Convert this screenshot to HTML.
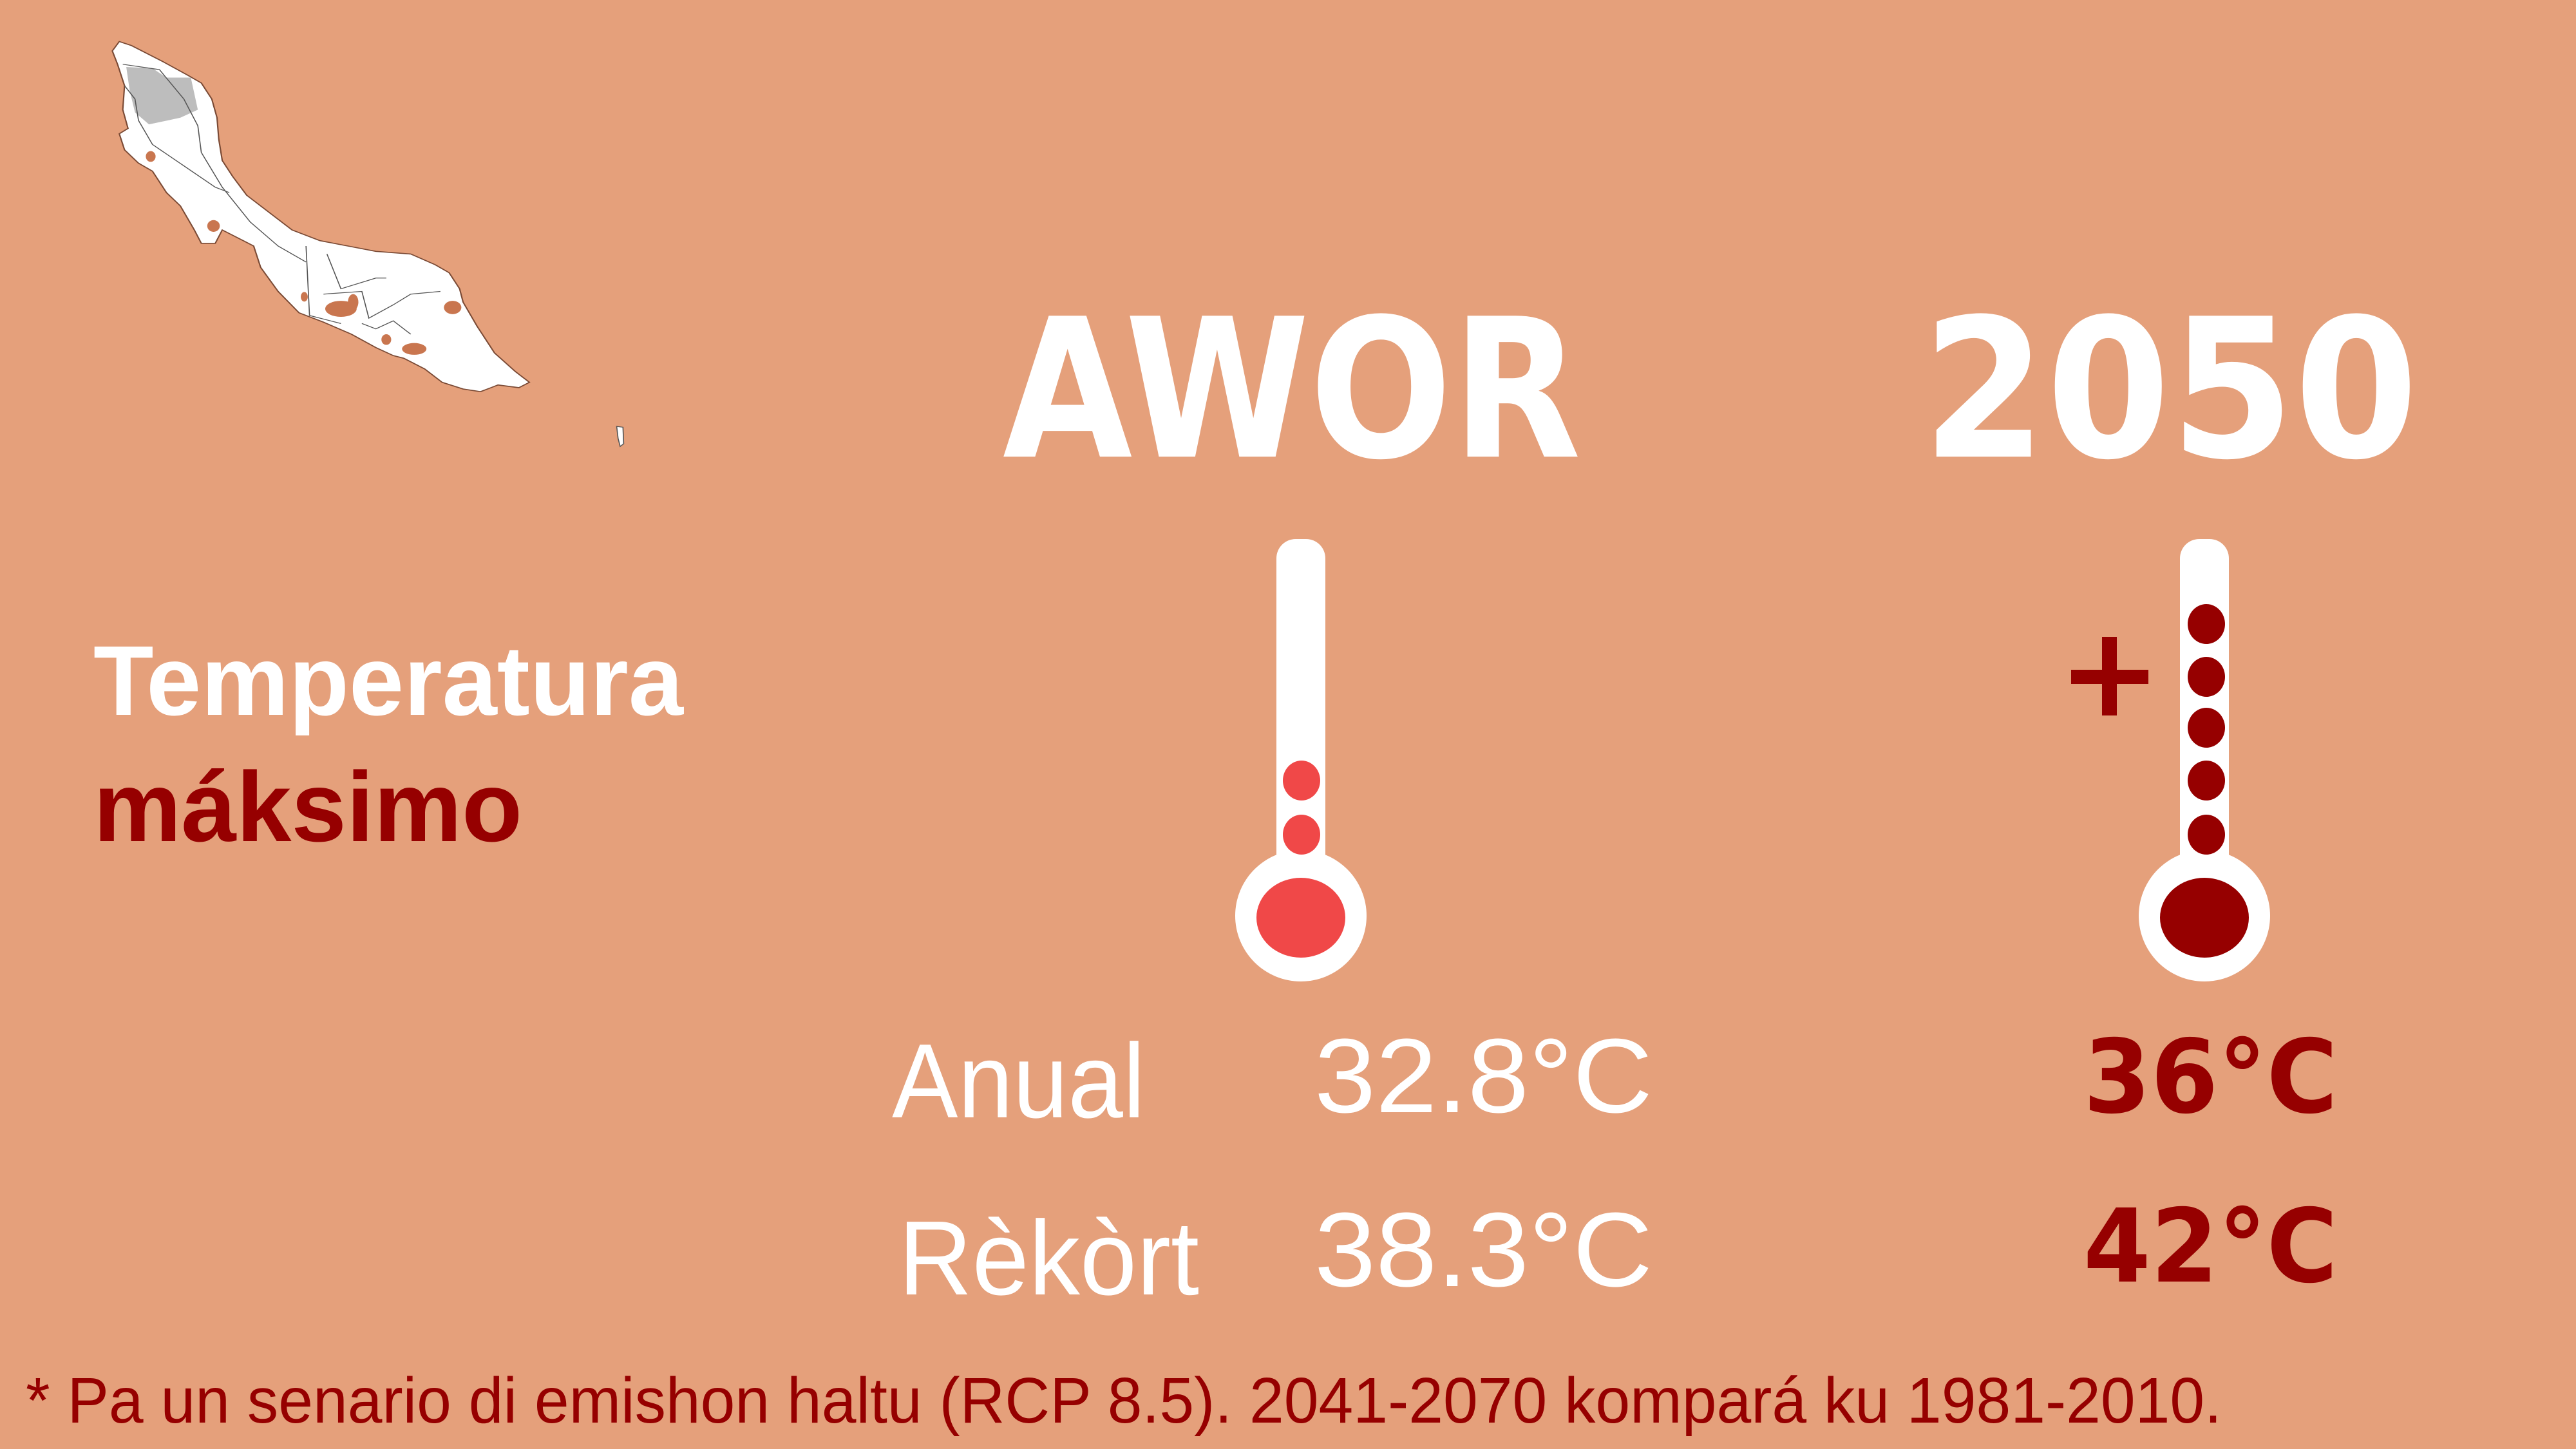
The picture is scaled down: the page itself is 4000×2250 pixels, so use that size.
<!DOCTYPE html>
<html><head><meta charset="utf-8"><style>
html,body{margin:0;padding:0;width:4000px;height:2250px;overflow:hidden;background:#E5A07B}
svg{display:block}
</style></head><body>
<svg width="4000" height="2250" viewBox="0 0 4000 2250" xmlns="http://www.w3.org/2000/svg">
<rect width="4000" height="2250" fill="#E5A07B"/>
<g transform="translate(150,50) scale(0.542,0.415)">
<polygon points="65,35 100,50 190,110 260,160 300,190 330,250 345,320 350,400 360,480 390,540 430,610 490,670 560,740 640,780 720,800 800,820 900,830 970,870 1010,900 1040,960 1050,1010 1090,1100 1140,1200 1200,1270 1240,1310 1210,1330 1150,1320 1100,1345 1050,1335 990,1310 940,1260 880,1220 850,1210 800,1180 730,1130 650,1085 580,1050 520,970 470,880 450,800 360,740 340,790 300,790 280,740 240,650 200,600 160,520 120,490 80,440 65,380 90,360 75,290 80,200 60,120 45,70" fill="#fff" stroke="#7a4a35" stroke-width="4"/>
<polygon points="85,130 160,135 200,170 270,170 290,290 240,320 150,345 110,300 95,220" fill="#bdbdbd"/>
<path d="M80,200 L110,250 L120,330 L160,420 L250,500 L340,580 L380,600 M75,120 L180,140 L250,250 L290,350 L300,450 L360,580 L440,710 L520,800 L600,860 M600,800 L610,1060 L700,1090 M660,830 L700,960 L800,920 L830,920 M650,980 L760,970 L780,1070 L850,1020 L900,980 L985,970 M760,1090 L800,1110 L850,1080 L900,1130" fill="none" stroke="#555" stroke-width="3"/>
<g fill="#C9764F">
<ellipse cx="155" cy="465" rx="14" ry="20"/>
<ellipse cx="335" cy="725" rx="18" ry="22"/>
<ellipse cx="700" cy="1035" rx="45" ry="30"/>
<ellipse cx="735" cy="1010" rx="15" ry="30"/>
<ellipse cx="1020" cy="1030" rx="25" ry="25"/>
<ellipse cx="830" cy="1150" rx="14" ry="20"/>
<ellipse cx="910" cy="1185" rx="35" ry="22"/>
<ellipse cx="595" cy="990" rx="10" ry="18"/>
</g>
<polygon points="1490,1475 1508,1478 1510,1540 1500,1550 1494,1520" fill="#fff" stroke="#555" stroke-width="3"/>
</g>
<g font-family="Liberation Sans, sans-serif">
<text x="1557" y="709" font-family="DejaVu Sans, sans-serif" font-size="300" font-weight="bold" fill="#fff" textLength="898" lengthAdjust="spacingAndGlyphs">AWOR</text>
<text x="2985" y="709" font-family="DejaVu Sans, sans-serif" font-size="300" font-weight="bold" fill="#fff" textLength="770" lengthAdjust="spacingAndGlyphs">2050</text>
<text x="145" y="1110" font-size="154" font-weight="bold" fill="#fff" textLength="916" lengthAdjust="spacingAndGlyphs">Temperatura</text>
<text x="145" y="1306" font-size="154" font-weight="bold" fill="#960000" textLength="666" lengthAdjust="spacingAndGlyphs">máksimo</text>
<text x="1385" y="1735" font-size="164" fill="#fff" textLength="393" lengthAdjust="spacingAndGlyphs">Anual</text>
<text x="2041" y="1727" font-size="164" fill="#fff" textLength="525" lengthAdjust="spacingAndGlyphs">32.8°C</text>
<text x="1395" y="2010" font-size="164" fill="#fff" textLength="467" lengthAdjust="spacingAndGlyphs">Rèkòrt</text>
<text x="2041" y="1997" font-size="164" fill="#fff" textLength="525" lengthAdjust="spacingAndGlyphs">38.3°C</text>
<text x="3235" y="1727" font-family="DejaVu Sans, sans-serif" font-size="158" font-weight="bold" fill="#960000" textLength="395" lengthAdjust="spacingAndGlyphs">36°C</text>
<text x="3235" y="1990" font-family="DejaVu Sans, sans-serif" font-size="158" font-weight="bold" fill="#960000" textLength="395" lengthAdjust="spacingAndGlyphs">42°C</text>
<text x="40" y="2209" font-size="100" fill="#960000" textLength="3410" lengthAdjust="spacingAndGlyphs">* Pa un senario di emishon haltu (RCP 8.5). 2041-2070 kompará ku 1981-2010.</text>
</g>
<g fill="#fff">
<rect x="1982" y="837" width="76" height="560" rx="30"/>
<ellipse cx="2020" cy="1422" rx="102" ry="102"/>
</g>
<g fill="#F04848">
<ellipse cx="2020" cy="1425" rx="69" ry="62"/>
<ellipse cx="2021" cy="1212" rx="29" ry="31"/>
<ellipse cx="2021" cy="1296" rx="29" ry="31"/>
</g>
<g fill="#fff">
<rect x="3385" y="837" width="76" height="560" rx="30"/>
<ellipse cx="3423" cy="1422" rx="102" ry="102"/>
</g>
<g fill="#960000">
<ellipse cx="3423" cy="1425" rx="69" ry="62"/>
<ellipse cx="3426" cy="969" rx="29" ry="31"/>
<ellipse cx="3426" cy="1051" rx="29" ry="31"/>
<ellipse cx="3426" cy="1130" rx="29" ry="31"/>
<ellipse cx="3426" cy="1212" rx="29" ry="31"/>
<ellipse cx="3426" cy="1296" rx="29" ry="31"/>
<rect x="3216" y="1040" width="120" height="22"/>
<rect x="3264" y="989" width="23" height="122"/>
</g>
</svg>
</body></html>
